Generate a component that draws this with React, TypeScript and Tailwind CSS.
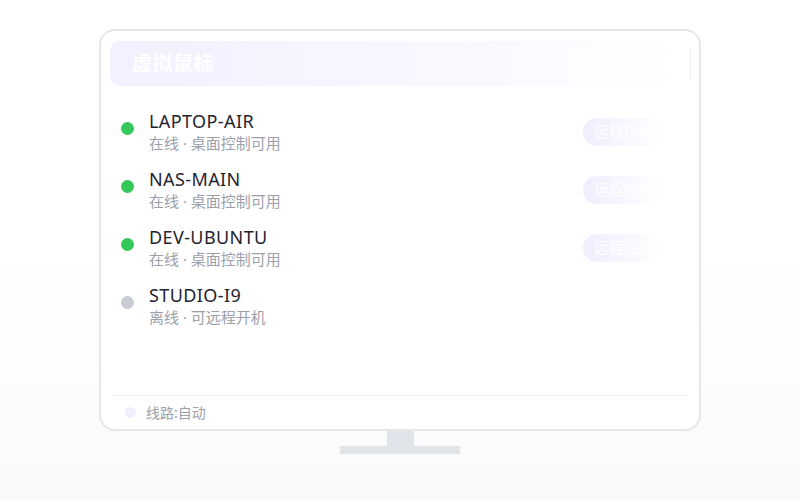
const devices = [
  { name: "LAPTOP-AIR", status: "在线 · 桌面控制可用", online: true },
  { name: "NAS-MAIN", status: "在线 · 桌面控制可用", online: true },
  { name: "DEV-UBUNTU", status: "在线 · 桌面控制可用", online: true },
  { name: "STUDIO-I9", status: "离线 · 可远程开机", online: false },
];

export default function App() {
  return (
    <div
      className="w-[800px] h-[500px] overflow-hidden bg-gradient-to-b from-white from-45% to-[#fafafb] pt-[29px]"
      style={{ fontFamily: '"Noto Sans", "Noto Sans CJK SC", sans-serif' }}
    >
      {/* Monitor */}
      <div className="mx-auto w-[602px] h-[402px] rounded-[16px] border-2 border-[#e4e6ea] bg-white flex flex-col px-[9px] pt-[10px]">
        {/* Header */}
        <div className="h-[45px] rounded-[10px] bg-gradient-to-r from-[#f3f0ff] via-[#f8f6ff] to-white flex items-center pl-[22px] pr-0 mr-[-1px]">
          <span className="text-[20px] font-bold text-white tracking-[0.5px]">虚拟鼠标</span>
          <div className="ml-auto flex items-center gap-3 h-full">
            <span className="text-[16px] font-bold text-white/80">⋯ ✕</span>
            <div className="w-px h-[32px] bg-[#eceef2]" />
          </div>
        </div>

        {/* Device list */}
        <div className="flex-1 flex flex-col gap-[13px] mt-[23px] pl-[11px] pr-[27px]">
          {devices.map((d) => (
            <div key={d.name} className="flex items-start">
              <span
                className={
                  d.online
                    ? "mt-[13px] w-[13px] h-[13px] rounded-full bg-[#34c759] shrink-0"
                    : "mt-[13px] w-[13px] h-[13px] rounded-full bg-[#c9cbd3] shrink-0"
                }
              />
              <div className="ml-[15px] flex flex-col">
                <span className="text-[18px] leading-[24px] text-[#1f2430] tracking-[0.4px]">{d.name}</span>
                <span className="text-[15px] leading-[21px] text-[#9ba0aa]">{d.status}</span>
              </div>
              {d.online && (
                <button className="ml-auto self-center h-[28px] w-[80px] rounded-full bg-gradient-to-r from-[#f0edff] to-white text-left pl-[11px] text-[15px] text-white">
                  远程控制
                </button>
              )}
            </div>
          ))}
        </div>

        {/* Footer */}
        <div className="mx-[2px] border-t border-[#eef0f3] h-[34px] flex items-center pl-[13px]">
          <span className="w-[11px] h-[11px] rounded-full bg-[#f0eefe]" />
          <span className="ml-[10px] text-[14px] text-[#9ba0aa]">线路:自动</span>
        </div>
      </div>

      {/* Stand */}
      <div className="flex flex-col items-center">
        <div className="w-[27px] h-[15px] bg-[#e1e4e8]" />
        <div className="w-[120px] h-[8px] bg-[#e1e4e8]" />
      </div>
    </div>
  );
}
